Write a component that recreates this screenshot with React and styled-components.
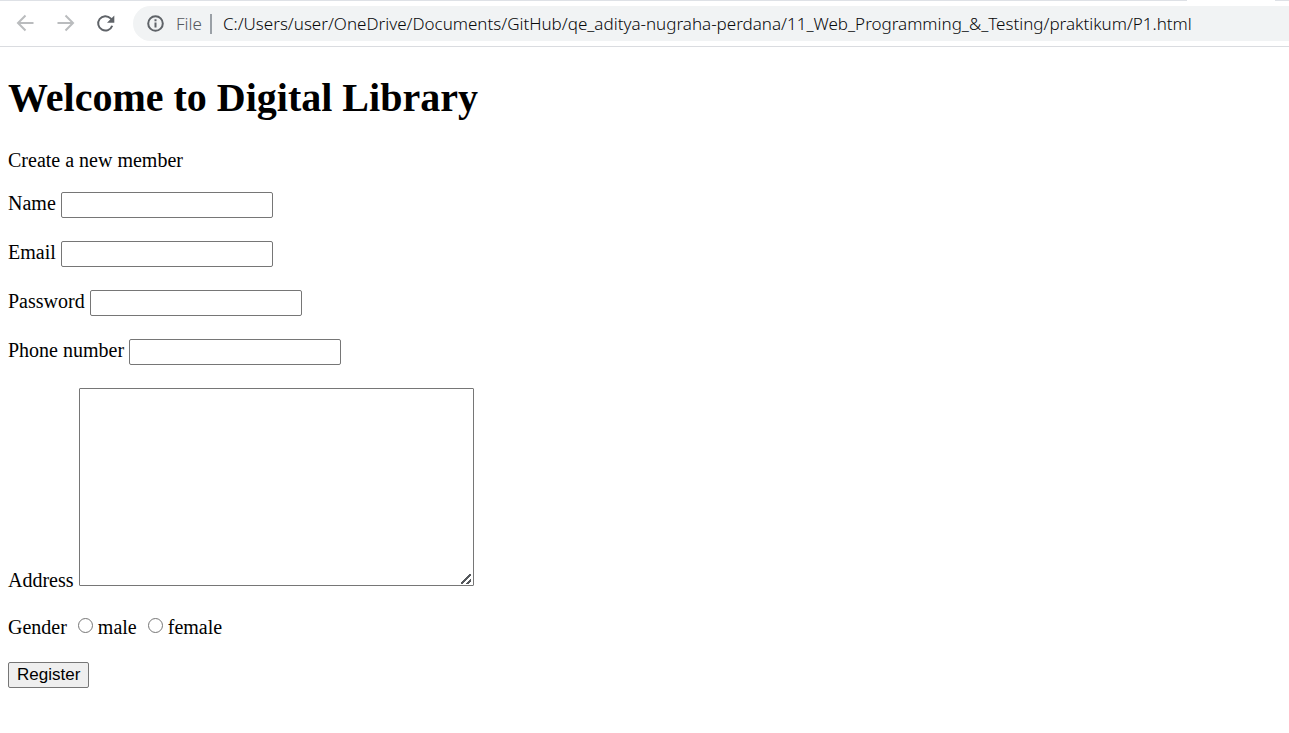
import React from "react";
import styled, { createGlobalStyle } from "styled-components";

const GlobalStyle = createGlobalStyle`
  * { box-sizing: border-box; }
  body {
    margin: 0;
    background: #fff;
    color: #000;
    font-family: "Liberation Serif", "Times New Roman", serif;
    font-size: 20px;
    line-height: 23px;
  }
`;

const TabStrip = styled.div`
  display: flex;
  justify-content: flex-end;
  height: 1px;
  background: #dee1e6;
`;

const ActiveTab = styled.div`
  width: 88px;
  margin-right: 14px;
  background: #fff;
`;

const Toolbar = styled.header`
  display: flex;
  align-items: center;
  height: 46px;
  padding: 5px 0;
  border-bottom: 1px solid #dadce0;
`;

const Navigation = styled.nav`
  display: flex;
  gap: 20px;
  padding: 0 18px 0 15px;
`;

const NavButton = styled.button`
  display: flex;
  width: 20px;
  height: 20px;
  padding: 0;
  border: 0;
  background: none;
  color: ${({ $muted }) => ($muted ? "#babcbe" : "#5f6368")};
`;

const AddressBar = styled.div`
  display: flex;
  flex: 1;
  align-items: center;
  min-width: 0;
  height: 35px;
  padding-left: 14px;
  border-radius: 18px 0 0 18px;
  background: #f1f3f4;
  color: #5f6368;
  font-family: "Noto Sans", "Segoe UI", sans-serif;
  font-size: 17px;
  font-weight: 300;
`;

const Scheme = styled.label`
  padding: 0 8px 0 12px;
  color: #55595e;
`;

const Divider = styled.span`
  width: 2px;
  height: 20px;
  background: #9aa0a6;
`;

const UrlInput = styled.input`
  flex: 1;
  min-width: 0;
  padding: 0 0 0 11px;
  border: 0;
  outline: 0;
  background: none;
  color: #08090b;
  font: inherit;
`;

const Page = styled.main`
  padding: 28px 8px;
`;

const Title = styled.h1`
  margin: 0 0 28px;
  font-size: 40px;
  line-height: 46px;
`;

const Intro = styled.p`
  margin: 0 0 20px;
`;

const Form = styled.form`
  display: flex;
  flex-direction: column;
  align-items: flex-start;
  gap: 23px;
`;

const Field = styled.div`
  display: flex;
  align-items: ${({ $align }) => $align || "baseline"};
  gap: 5px;
`;

const TextInput = styled.input`
  width: 212px;
  height: 26px;
  padding: 1px 2px;
  border: 1px solid #767676;
  border-radius: 2px;
  background: #fff;
  font: 17px "Liberation Sans", Arial, sans-serif;
`;

const TextArea = styled.textarea`
  width: 395px;
  height: 198px;
  margin: 0 0 6px;
  padding: 2px;
  border: 1px solid #767676;
  border-radius: 1px;
  background: #fff;
  font: 17px "Liberation Mono", monospace;

  &::-webkit-resizer {
    background: linear-gradient(
        135deg,
        transparent 43%,
        #55585c 43%,
        #55585c 57%,
        transparent 57%,
        transparent 73%,
        #55585c 73%,
        #55585c 87%,
        transparent 87%
      )
      3px 4px / 10px 10px no-repeat;
  }
`;

const RadioGroup = styled(Field)`
  padding-top: 1px;
`;

const Choices = styled.div`
  display: flex;
  gap: 11px;
  padding-left: 6px;
`;

const Choice = styled.label`
  display: flex;
  gap: 5px;
`;

const Radio = styled.input`
  appearance: none;
  width: 15px;
  height: 15px;
  margin: 2px 0 0;
  border: 1px solid #767676;
  border-radius: 50%;
  background: #fff;

  &:checked {
    border: 4px solid #0075ff;
  }
`;

const Submit = styled.button`
  height: 26px;
  padding: 0 8px;
  border: 1px solid #767676;
  border-radius: 2px;
  background: #efefef;
  color: #000;
  font: 17px "Liberation Sans", Arial, sans-serif;
`;

const strokeProps = { fill: "none", stroke: "currentColor", strokeWidth: 2 };

const fields = [
  { id: "name", label: "Name", type: "text" },
  { id: "email", label: "Email", type: "email" },
  { id: "password", label: "Password", type: "password" },
  { id: "phone", label: "Phone number", type: "tel" },
];

export default function App() {
  return (
    <>
      <GlobalStyle />
      <TabStrip>
        <ActiveTab />
      </TabStrip>
      <Toolbar>
        <Navigation>
          <NavButton type="button" aria-label="Back" $muted>
            <svg width="20" height="20" viewBox="0 0 20 20" {...strokeProps}>
              <path d="M18.5 9H3.5M10.5 1.5L3 9l7.5 7.5" />
            </svg>
          </NavButton>
          <NavButton type="button" aria-label="Forward" $muted>
            <svg width="20" height="20" viewBox="0 0 20 20" {...strokeProps}>
              <path d="M2.5 9h15M10.5 1.5L18 9l-7.5 7.5" />
            </svg>
          </NavButton>
          <NavButton type="button" aria-label="Reload">
            <svg width="20" height="20" viewBox="0 0 20 20" {...strokeProps}>
              <path d="M17.2 11.7A7.2 7.2 0 1 1 15.6 4.4l1.4 1.5" />
              <path d="M19.3 1.4v7.3H12z" fill="currentColor" stroke="none" />
            </svg>
          </NavButton>
        </Navigation>
        <AddressBar>
          <svg width="17" height="17" viewBox="0 0 17 17" {...strokeProps} aria-hidden="true">
            <circle cx="8.5" cy="8.5" r="7.3" />
            <path d="M8.5 7.5v5M8.5 4.2v2" />
          </svg>
          <Scheme htmlFor="url">File</Scheme>
          <Divider />
          <UrlInput
            id="url"
            type="text"
            defaultValue="C:/Users/user/OneDrive/Documents/GitHub/qe_aditya-nugraha-perdana/11_Web_Programming_&_Testing/praktikum/P1.html"
          />
        </AddressBar>
      </Toolbar>
      <Page>
        <Title>Welcome to Digital Library</Title>
        <Intro>Create a new member</Intro>
        <Form onSubmit={(event) => event.preventDefault()}>
          {fields.map(({ id, label, type }) => (
            <Field key={id}>
              <label htmlFor={id}>{label}</label>
              <TextInput id={id} name={id} type={type} />
            </Field>
          ))}
          <Field $align="flex-end">
            <label htmlFor="address">Address</label>
            <TextArea id="address" name="address" />
          </Field>
          <RadioGroup $align="flex-start" role="radiogroup" aria-labelledby="gender">
            <span id="gender">Gender</span>
            <Choices>
              <Choice>
                <Radio type="radio" name="gender" value="male" />
                male
              </Choice>
              <Choice>
                <Radio type="radio" name="gender" value="female" />
                female
              </Choice>
            </Choices>
          </RadioGroup>
          <Submit type="submit">Register</Submit>
        </Form>
      </Page>
    </>
  );
}
